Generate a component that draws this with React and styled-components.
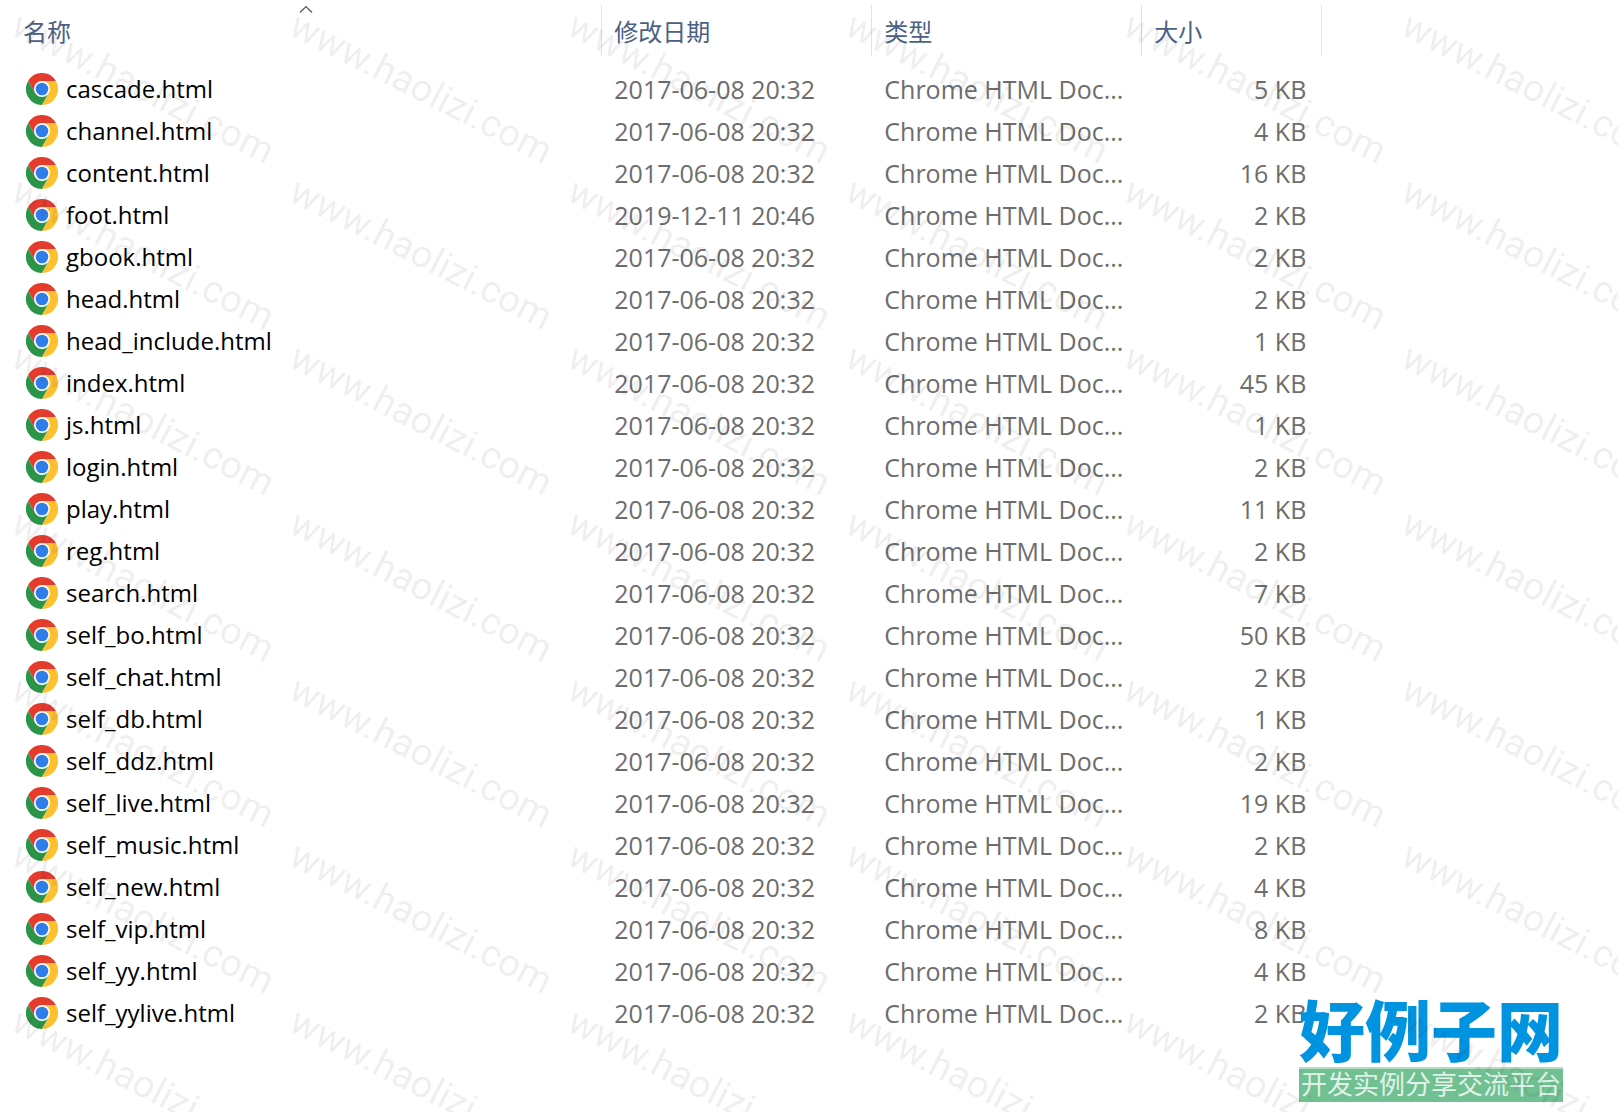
import React, { useState } from 'react';
import styled, { createGlobalStyle } from 'styled-components';

const GlobalStyle = createGlobalStyle`
  * {
    box-sizing: border-box;
  }
  body {
    margin: 0;
    background-color: #fff;
    font-family: 'Open Sans', 'Noto Sans CJK SC', sans-serif;
  }
`;

const Page = styled.main`
  position: relative;
  min-height: 100vh;
  padding: 5px 0 0 11px;
  overflow: hidden;
`;

const FileTable = styled.table`
  width: 81.6%;
  table-layout: fixed;
  border-collapse: collapse;
  font-size: 25px;
  line-height: 42px;
`;

const Column = styled.col`
  width: ${({ $width }) => $width || 'auto'};
`;

const HeadCell = styled.th`
  padding: 0 0 12px;
  font-weight: normal;
`;

const SortButton = styled.button`
  position: relative;
  display: flex;
  align-items: center;
  width: 100%;
  height: 51px;
  padding: 0 12px;
  border: none;
  border-right: 1px solid #e2e2e2;
  background: none;
  color: #4a6184;
  font-family: 'Noto Sans CJK SC', sans-serif;
  font-size: 24px;
  font-weight: 400;
  cursor: pointer;
`;

const SortArrow = styled.svg`
  position: absolute;
  top: 0;
  left: 50%;
  width: 14px;
  height: 8px;
  transform: translateX(-50%) ${({ $desc }) => ($desc ? 'scaleY(-1)' : '')};
`;

const Cell = styled.td`
  height: 42px;
  padding: 0 12px;
  overflow: hidden;
  color: #6d6d6d;
  text-align: ${({ $align }) => $align || 'left'};
  text-overflow: ellipsis;
  white-space: nowrap;
`;

const SizeCell = styled(Cell)`
  padding-right: 16px;
`;

const FileName = styled.div`
  display: flex;
  align-items: center;
  gap: 8px;
  height: 42px;
  padding-left: 3px;
  color: #000;
  font-size: 24px;
`;

const Icon = styled.svg`
  flex: none;
  width: 32px;
  height: 32px;
`;

const Watermark = styled.div`
  position: absolute;
  inset: 0;
  display: grid;
  grid-template-columns: repeat(auto-fill, 278px);
  grid-auto-rows: 166px;
  width: calc(100% + 278px);
  padding: 2px 0 0 10px;
  color: rgba(0, 0, 0, 0.08);
  font-family: Roboto, sans-serif;
  font-size: 38px;
  font-weight: 400;
  line-height: 38px;
  white-space: nowrap;
  pointer-events: none;
`;

const WatermarkText = styled.span`
  transform: rotate(27deg);
  transform-origin: 0 30px;
`;

const Brand = styled.div`
  position: absolute;
  right: 55px;
  bottom: 10px;
  width: 264px;
  font-family: 'Noto Sans CJK SC', sans-serif;
  text-align: center;
  white-space: nowrap;
`;

const BrandName = styled.div`
  height: 76px;
  color: #0093e0;
  font-size: 66px;
  font-weight: 900;
  line-height: 72px;
`;

const BrandSlogan = styled.div`
  height: 35px;
  border-top: 2px solid #b3dcc4;
  background-color: #71c092;
  color: #e0f3e8;
  font-size: 26px;
  line-height: 28px;
`;

const DATE = '2017-06-08 20:32';

const files = [
  { name: 'cascade.html', date: DATE, size: 5 },
  { name: 'channel.html', date: DATE, size: 4 },
  { name: 'content.html', date: DATE, size: 16 },
  { name: 'foot.html', date: '2019-12-11 20:46', size: 2 },
  { name: 'gbook.html', date: DATE, size: 2 },
  { name: 'head.html', date: DATE, size: 2 },
  { name: 'head_include.html', date: DATE, size: 1 },
  { name: 'index.html', date: DATE, size: 45 },
  { name: 'js.html', date: DATE, size: 1 },
  { name: 'login.html', date: DATE, size: 2 },
  { name: 'play.html', date: DATE, size: 11 },
  { name: 'reg.html', date: DATE, size: 2 },
  { name: 'search.html', date: DATE, size: 7 },
  { name: 'self_bo.html', date: DATE, size: 50 },
  { name: 'self_chat.html', date: DATE, size: 2 },
  { name: 'self_db.html', date: DATE, size: 1 },
  { name: 'self_ddz.html', date: DATE, size: 2 },
  { name: 'self_live.html', date: DATE, size: 19 },
  { name: 'self_music.html', date: DATE, size: 2 },
  { name: 'self_new.html', date: DATE, size: 4 },
  { name: 'self_vip.html', date: DATE, size: 8 },
  { name: 'self_yy.html', date: DATE, size: 4 },
  { name: 'self_yylive.html', date: DATE, size: 2 },
];

const columns = [
  { key: 'name', label: '名称' },
  { key: 'date', label: '修改日期', width: '270px' },
  { key: 'type', label: '类型', width: '270px' },
  { key: 'size', label: '大小', width: '180px' },
];

const compare = (a, b, key) => {
  if (key === 'size') return a.size - b.size;
  if (key === 'type') return 0;
  return a[key] < b[key] ? -1 : Number(a[key] > b[key]);
};

const ChromeIcon = () => (
  <Icon viewBox="0 0 32 32" aria-hidden="true">
    <path d="M16 8H29.86A16 16 0 0 0 2.14 8L9.07 20L16 16Z" fill="#e33b2e" />
    <path d="M2.14 8A16 16 0 0 0 16 32L22.93 20L16 16L9.07 20Z" fill="#2a9548" />
    <path d="M29.86 8A16 16 0 0 1 16 32L22.93 20L16 16V8Z" fill="#fdc130" />
    <circle cx="16" cy="16" r="8" fill="#fff" />
    <circle cx="16" cy="16" r="6.3" fill="#2f7de9" />
  </Icon>
);

const App = () => {
  const [sort, setSort] = useState({ key: 'name', desc: false });

  const onSort = (key) =>
    setSort((prev) => ({ key, desc: prev.key === key && !prev.desc }));

  const sorted = [...files].sort(
    (a, b) => compare(a, b, sort.key) * (sort.desc ? -1 : 1)
  );

  return (
    <>
      <GlobalStyle />
      <Page>
        <FileTable>
          <colgroup>
            {columns.map(({ key, width }) => (
              <Column key={key} $width={width} />
            ))}
          </colgroup>
          <thead>
            <tr>
              {columns.map(({ key, label }) => (
                <HeadCell key={key} scope="col">
                  <SortButton type="button" onClick={() => onSort(key)}>
                    {label}
                    {sort.key === key && (
                      <SortArrow
                        $desc={sort.desc}
                        viewBox="0 0 14 8"
                        aria-hidden="true"
                      >
                        <path
                          d="M1 7.5L7 1.5L13 7.5"
                          fill="none"
                          stroke="#555"
                          strokeWidth="1.2"
                        />
                      </SortArrow>
                    )}
                  </SortButton>
                </HeadCell>
              ))}
            </tr>
          </thead>
          <tbody>
            {sorted.map(({ name, date, size }) => (
              <tr key={name}>
                <Cell>
                  <FileName>
                    <ChromeIcon />
                    {name}
                  </FileName>
                </Cell>
                <Cell>{date}</Cell>
                <Cell>Chrome HTML Doc...</Cell>
                <SizeCell $align="right">{size} KB</SizeCell>
              </tr>
            ))}
          </tbody>
        </FileTable>
        <Brand>
          <BrandName>好例子网</BrandName>
          <BrandSlogan>开发实例分享交流平台</BrandSlogan>
        </Brand>
        <Watermark aria-hidden="true">
          {Array.from({ length: 42 }, (_, i) => (
            <WatermarkText key={i}>www.haolizi.com</WatermarkText>
          ))}
        </Watermark>
      </Page>
    </>
  );
};

export default App;
